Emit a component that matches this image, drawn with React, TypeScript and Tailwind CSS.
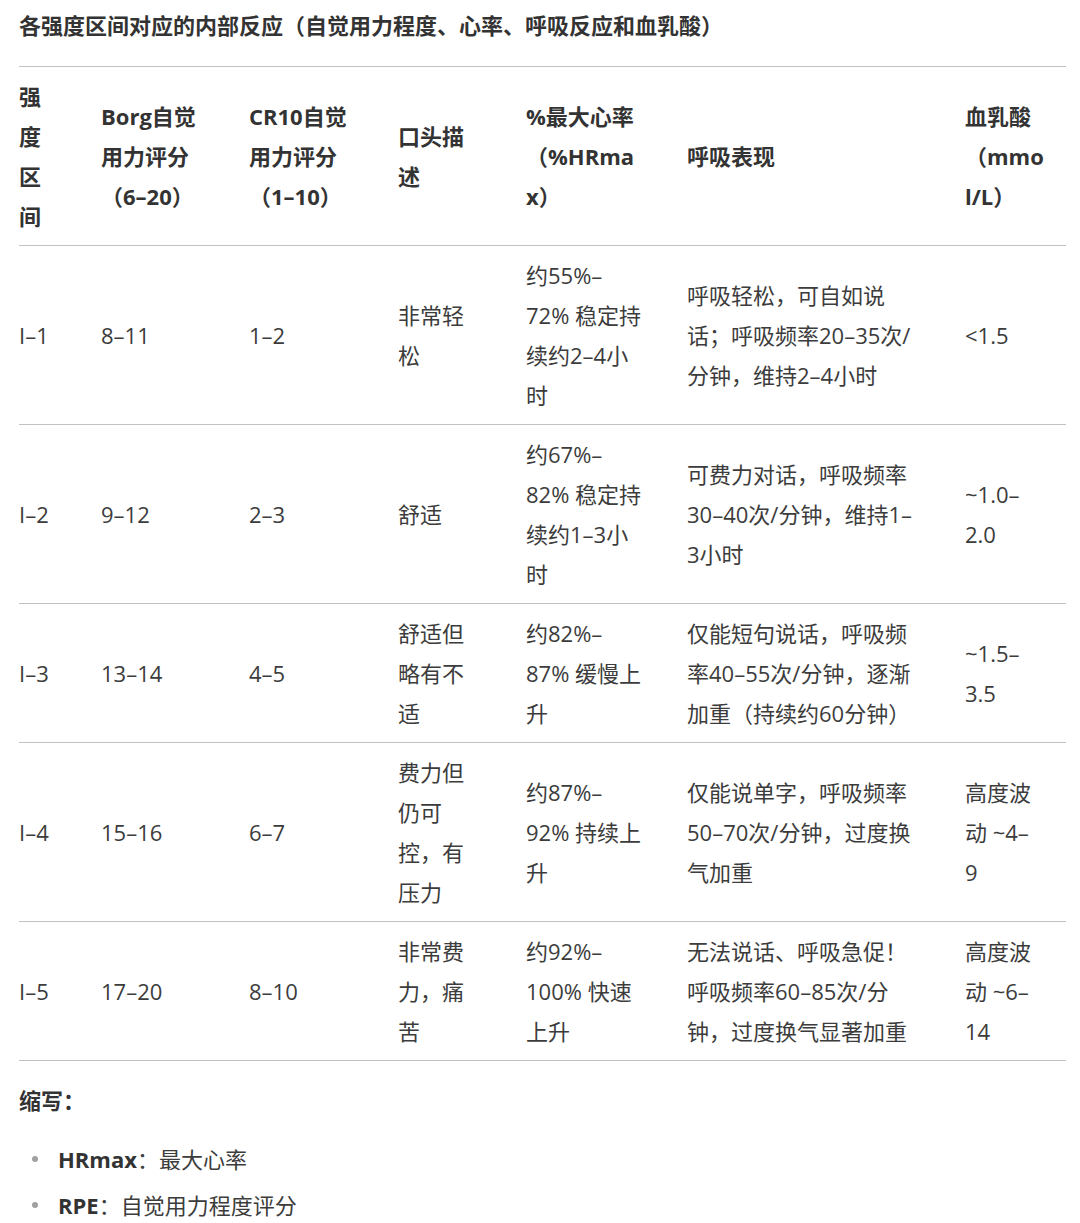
import React from "react";

const FONT = { fontFamily: '"Open Sans", "Noto Sans CJK SC", sans-serif' };

type Row = {
  cells: string[][];
};

const header: string[][] = [
  ["强", "度", "区", "间"],
  ["Borg自觉", "用力评分", "（6–20）"],
  ["CR10自觉", "用力评分", "（1–10）"],
  ["口头描", "述"],
  ["%最大心率", "（%HRma", "x）"],
  ["呼吸表现"],
  ["血乳酸", "（mmo", "l/L）"],
];

const rows: Row[] = [
  {
    cells: [
      ["I–1"],
      ["8–11"],
      ["1–2"],
      ["非常轻", "松"],
      ["约55%–", "72% 稳定持", "续约2–4小", "时"],
      ["呼吸轻松，可自如说", "话；呼吸频率20–35次/", "分钟，维持2–4小时"],
      ["<1.5"],
    ],
  },
  {
    cells: [
      ["I–2"],
      ["9–12"],
      ["2–3"],
      ["舒适"],
      ["约67%–", "82% 稳定持", "续约1–3小", "时"],
      ["可费力对话，呼吸频率", "30–40次/分钟，维持1–", "3小时"],
      ["~1.0–", "2.0"],
    ],
  },
  {
    cells: [
      ["I–3"],
      ["13–14"],
      ["4–5"],
      ["舒适但", "略有不", "适"],
      ["约82%–", "87% 缓慢上", "升"],
      ["仅能短句说话，呼吸频", "率40–55次/分钟，逐渐", "加重（持续约60分钟）"],
      ["~1.5–", "3.5"],
    ],
  },
  {
    cells: [
      ["I–4"],
      ["15–16"],
      ["6–7"],
      ["费力但", "仍可", "控，有", "压力"],
      ["约87%–", "92% 持续上", "升"],
      ["仅能说单字，呼吸频率", "50–70次/分钟，过度换", "气加重"],
      ["高度波", "动 ~4–", "9"],
    ],
  },
  {
    cells: [
      ["I–5"],
      ["17–20"],
      ["8–10"],
      ["非常费", "力，痛", "苦"],
      ["约92%–", "100% 快速", "上升"],
      ["无法说话、呼吸急促！", "呼吸频率60–85次/分", "钟，过度换气显著加重"],
      ["高度波", "动 ~6–", "14"],
    ],
  },
];

function Lines({ lines }: { lines: string[] }) {
  return (
    <>
      {lines.map((l, i) => (
        <div key={i} className="whitespace-nowrap">
          {l}
        </div>
      ))}
    </>
  );
}

export default function App() {
  return (
    <div className="w-[1080px] bg-white text-[22px] leading-[40px] text-[#3c3c3c]" style={FONT}>
      <div className="pl-[19px] pt-[5px] font-bold text-[#333333]">
        各强度区间对应的内部反应（自觉用力程度、心率、呼吸反应和血乳酸）
      </div>
      <table className="ml-[19px] mt-[21px] w-[1047px] table-fixed border-collapse">
        <colgroup>
          <col className="w-[82px]" />
          <col className="w-[148px]" />
          <col className="w-[149px]" />
          <col className="w-[128px]" />
          <col className="w-[161px]" />
          <col className="w-[278px]" />
          <col className="w-[101px]" />
        </colgroup>
        <thead>
          <tr className="border-y border-[#c2c2c2]">
            {header.map((c, i) => (
              <th
                key={i}
                className="py-[9px] pl-0 pr-0 text-left align-middle font-bold text-[#333333]"
              >
                <Lines lines={c} />
              </th>
            ))}
          </tr>
        </thead>
        <tbody>
          {rows.map((r, ri) => (
            <tr key={ri} className="border-b border-[#c2c2c2]">
              {r.cells.map((c, ci) => (
                <td key={ci} className="py-[9px] pl-0 pr-0 text-left align-middle font-normal">
                  <Lines lines={c} />
                </td>
              ))}
            </tr>
          ))}
        </tbody>
      </table>
      <div className="pl-[19px] mt-[19px] font-bold text-[#333333]">缩写：</div>
      <ul className="mt-[19px] flex flex-col gap-[6px]">
        <li className="flex items-center pl-[32px]">
          <span className="mr-[20px] h-[6px] w-[6px] rounded-full bg-[#a0a0a0]" />
          <span>
            <span className="font-bold text-[#333333]">HRmax</span>：最大心率
          </span>
        </li>
        <li className="flex items-center pl-[32px]">
          <span className="mr-[20px] h-[6px] w-[6px] rounded-full bg-[#a0a0a0]" />
          <span>
            <span className="font-bold text-[#333333]">RPE</span>：自觉用力程度评分
          </span>
        </li>
      </ul>
    </div>
  );
}
